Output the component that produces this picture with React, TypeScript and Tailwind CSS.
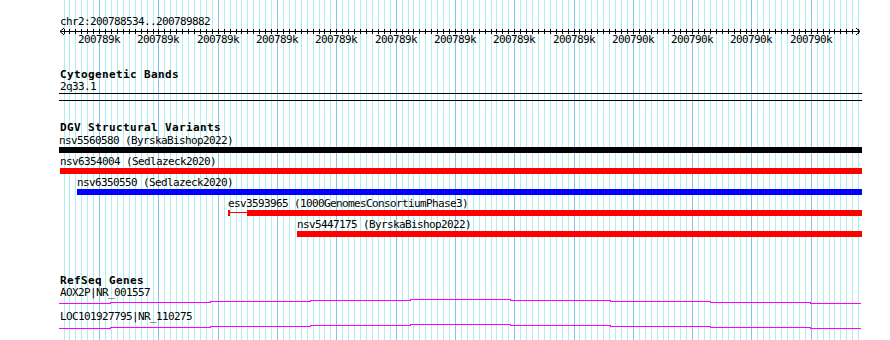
import React from "react";

const START = 200788534;
const END = 200789882;
const X0 = 60;
const PX_PER_BP = 800 / 1349;

const bpToX = (bp: number) => Math.round(X0 + (bp - START) * PX_PER_BP);

interface Variant {
  label: string;
  x: number;
  color: string;
  thinTo?: number;
}

const variants: Variant[] = [
  { label: "nsv5560580 (ByrskaBishop2022)", x: 59, color: "bg-black" },
  { label: "nsv6354004 (Sedlazeck2020)", x: 60, color: "bg-[#ff0000]" },
  { label: "nsv6350550 (Sedlazeck2020)", x: 77, color: "bg-[#0000ff]" },
  {
    label: "esv3593965 (1000GenomesConsortiumPhase3)",
    x: 228,
    color: "bg-[#ff0000]",
    thinTo: 247,
  },
  { label: "nsv5447175 (ByrskaBishop2022)", x: 297, color: "bg-[#ff0000]" },
];

const RIGHT = 862;

// gene line steps, every 100px
const stepsX = [59, 110, 210, 310, 410, 510, 610, 710, 810, 861];

function genePath(levels: number[]) {
  let d = `M${stepsX[0]} ${levels[0] + 0.5}`;
  for (let i = 0; i < levels.length; i++) {
    if (i > 0) d += ` V${levels[i] + 0.5}`;
    d += ` H${stepsX[i + 1]}`;
  }
  return d;
}

function Grid() {
  const lines = [];
  for (let bp = 200788540; bp <= 200789880; bp += 10) {
    const x = bpToX(bp) + 0.5;
    const major = bp % 100 === 0;
    lines.push(
      <line
        key={bp}
        x1={x}
        x2={x}
        y1={0}
        y2={340}
        stroke={major ? "#86c3ea" : "#afeeee"}
        strokeWidth={1}
      />
    );
  }
  return (
    <svg
      className="absolute inset-0 pointer-events-none"
      width={890}
      height={340}
      shapeRendering="crispEdges"
    >
      {lines}
    </svg>
  );
}

function Ruler() {
  const ticks = [];
  for (let bp = 200788540; bp <= 200789880; bp += 10) {
    const x = bpToX(bp) + 0.5;
    ticks.push(<line key={bp} x1={x} x2={x} y1={1} y2={6} stroke="#000" />);
  }
  return (
    <svg
      className="block overflow-visible"
      width={890}
      height={6}
      shapeRendering="crispEdges"
    >
      <line x1={60} x2={860} y1={3.5} y2={3.5} stroke="#000" />
      {ticks}
      <polyline points="64,0 60,3.5 64,7" fill="none" stroke="#000" shapeRendering="auto" />
      <polyline points="856,0 860,3.5 856,7" fill="none" stroke="#000" shapeRendering="auto" />
    </svg>
  );
}

function RulerLabels() {
  const labels = [];
  for (let bp = 200788600; bp <= 200789800; bp += 100) {
    labels.push(
      <span
        key={bp}
        className="absolute top-0 -translate-x-1/2 whitespace-nowrap"
        style={{ left: bpToX(bp) }}
      >
        {Math.round(bp / 1000)}k
      </span>
    );
  }
  return <div className="relative h-[12px]">{labels}</div>;
}

function TrackTitle({ children, className = "" }: { children: React.ReactNode; className?: string }) {
  return (
    <div className={`pl-[60px] h-[12px] font-bold tracking-[0.38px] ${className}`}>{children}</div>
  );
}

function VariantRow({ v }: { v: Variant }) {
  return (
    <div className="mt-[3px] first:mt-[1px]" style={{ paddingLeft: v.x }}>
      <div className="h-[12px] whitespace-nowrap">{v.label}</div>
      {v.thinTo ? (
        <div className="flex h-[6px]">
          <div className={`w-[2px] h-[6px] ${v.color}`} />
          <div className={`h-[1px] mt-[2px] ${v.color}`} style={{ width: v.thinTo - v.x - 2 }} />
          <div className={`h-[6px] ${v.color}`} style={{ width: RIGHT - v.thinTo }} />
        </div>
      ) : (
        <div className={`h-[6px] ${v.color}`} style={{ width: RIGHT - v.x }} />
      )}
    </div>
  );
}

function GeneLine({ levels }: { levels: number[] }) {
  return (
    <svg className="block" width={890} height={12} shapeRendering="crispEdges">
      <path d={genePath(levels)} fill="none" stroke="#ff00ff" strokeWidth={1} />
    </svg>
  );
}

export default function App() {
  return (
    <div className="relative w-[890px] h-[340px] bg-white overflow-hidden text-black font-['DejaVu_Sans_Mono',monospace] text-[11px] leading-[12px] tracking-[-0.62px]">
      <Grid />
      <div className="relative pt-[16px]">
        <div className="pl-[60px] h-[12px]">
          chr2:{START}..{END}
        </div>
        <Ruler />
        <RulerLabels />

        <TrackTitle className="mt-[23px]">Cytogenetic Bands</TrackTitle>
        <div className="pl-[60px] h-[12px]">2q33.1</div>
        <div className="ml-[59px] w-[803px] h-[8px] border-y border-black" />

        <TrackTitle className="mt-[21px]">DGV Structural Variants</TrackTitle>
        <div>
          {variants.map((v) => (
            <VariantRow key={v.label} v={v} />
          ))}
        </div>

        <TrackTitle className="mt-[38px]">RefSeq Genes</TrackTitle>
        <div className="pl-[60px] h-[12px]">AOX2P|NR_001557</div>
        <GeneLine levels={[4, 3, 2, 1, 0, 1, 2, 3, 4]} />
        <div className="pl-[60px] h-[12px]">LOC101927795|NR_110275</div>
        <GeneLine levels={[5, 4, 3, 2, 1, 2, 3, 4, 5]} />
      </div>
    </div>
  );
}
